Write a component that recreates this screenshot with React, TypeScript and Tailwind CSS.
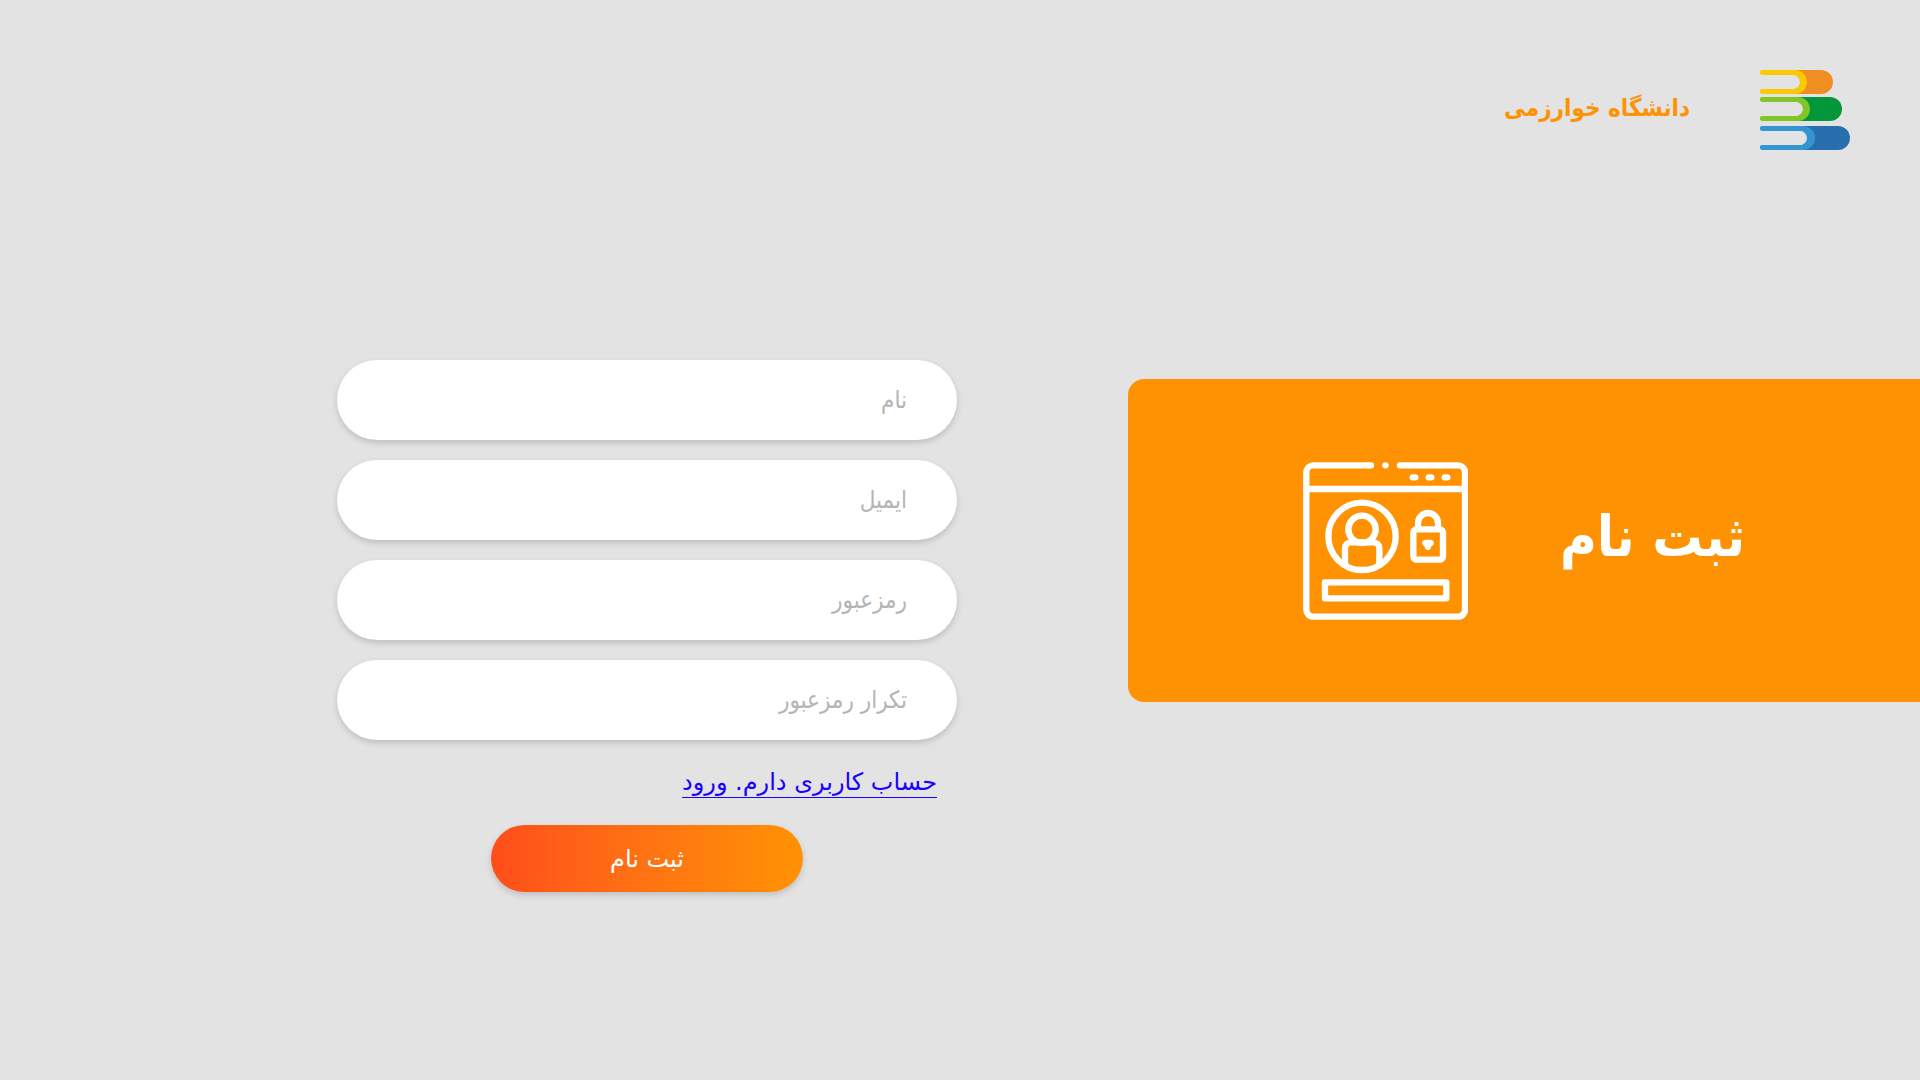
import React from "react";

const fields = [
  { id: "name", label: "نام", type: "text" },
  { id: "email", label: "ایمیل", type: "email" },
  { id: "password", label: "رمزعبور", type: "password" },
  { id: "confirm", label: "تکرار رمزعبور", type: "password" },
];

function Logo() {
  return (
    <svg viewBox="60 60 270 240" className="h-20 w-[90px] shrink-0" aria-hidden="true">
      <path fill="#ef8f23" d="M165 60H243A36 36 0 0 1 243 132H165Z" />
      <path fill="#fbca03" d="M67 60H165A36 36 0 0 1 165 132H67A7.5 7.5 0 0 1 67 117H159A21 21 0 0 0 159 75H67A7.5 7.5 0 0 1 67 60Z" />
      <path fill="#e3e3e3" d="M67 75H159A21 21 0 0 1 159 117H67Z" />
      <path fill="#04973a" d="M174 141H270A36 36 0 0 1 270 213H174Z" />
      <path fill="#82c625" d="M67 141H174A36 36 0 0 1 174 213H67A7.5 7.5 0 0 1 67 198H168A21 21 0 0 0 168 156H67A7.5 7.5 0 0 1 67 141Z" />
      <path fill="#e3e3e3" d="M67 156H168A21 21 0 0 1 168 198H67Z" />
      <path fill="#296fad" d="M189 228H294A36 36 0 0 1 294 300H189Z" />
      <path fill="#3495d3" d="M67 228H189A36 36 0 0 1 189 300H67A7.5 7.5 0 0 1 67 285H180A21 21 0 0 0 180 243H67A7.5 7.5 0 0 1 67 228Z" />
      <path fill="#e3e3e3" d="M67 243H180A21 21 0 0 1 180 285H67Z" />
    </svg>
  );
}

function SignupIcon() {
  return (
    <svg
      viewBox="66 66 495 474"
      className="h-[158px] w-[165px] shrink-0"
      fill="none"
      stroke="#fff"
      strokeWidth="19"
      strokeLinecap="round"
      strokeLinejoin="round"
      aria-hidden="true"
    >
      <path d="M270 76H97A21 21 0 0 0 76 97V508A21 21 0 0 0 97 530H531A21 21 0 0 0 552 508V97A21 21 0 0 0 531 76H357" />
      <path d="M76 147H552" />
      <path d="M313.500 76h.1M395 112h8M443 112h8M491 112h8" />
      <circle cx="243" cy="289" r="101" />
      <circle cx="243" cy="268" r="41" />
      <path d="M192 374V325A18 18 0 0 1 210 307H277A18 18 0 0 1 295 325V374" />
      <rect x="397" y="268" width="89" height="91" rx="10" />
      <path d="M411 264V249A30 30 0 0 1 471 249V264" />
      <path fill="#fff" stroke="none" d="M433 299H449Q459 301 459 310Q458 318 450 320Q449 330 441 330Q433 330 431 320Q424 318 423 310Q423 301 433 299Z" />
      <rect x="132" y="427" width="364" height="48" />
    </svg>
  );
}

export default function App() {
  return (
    <div dir="rtl" lang="fa" className="min-h-screen bg-[#e3e3e3] pb-10 font-['DejaVu_Sans',sans-serif]">
      <header className="flex items-center gap-[70px] px-[70px] pt-[70px]">
        <Logo />
        <p className="pb-1 font-['DejaVu_Sans_Condensed','DejaVu_Sans',sans-serif] text-2xl font-bold text-[#ff9202]">
          دانشگاه خوارزمی
        </p>
      </header>

      <main className="mt-[210px] flex items-start">
        <section className="mt-[19px] flex h-[323px] w-[41.25%] shrink-0 items-center justify-center gap-[92px] rounded-l-2xl bg-[#ff9202]">
          <h1 className="pb-2 font-['DejaVu_Sans_Condensed','DejaVu_Sans',sans-serif] text-[56px] leading-[72px] font-bold text-white">
            ثبت نام
          </h1>
          <SignupIcon />
        </section>

        <form className="ms-[171px] flex w-full max-w-[620px] flex-col gap-5" onSubmit={(e) => e.preventDefault()}>
          {fields.map((field) => (
            <input
              key={field.id}
              id={field.id}
              type={field.type}
              dir="rtl"
              aria-label={field.label}
              placeholder={field.label}
              className="h-20 w-full rounded-full bg-white px-[50px] text-right font-['DejaVu_Sans_Condensed','DejaVu_Sans',sans-serif] text-2xl text-gray-800 shadow-[0_3px_6px_rgba(0,0,0,0.16)] outline-none placeholder:text-[#b4b4b4]"
            />
          ))}
          <a href="#login" className="ms-5 self-start text-2xl leading-[45px] text-[#1a00ff] underline decoration-1 underline-offset-[7px]">
            حساب کاربری دارم. ورود
          </a>
          <button
            type="submit"
            className="h-[67px] w-[312px] self-center rounded-full bg-linear-to-r from-[#ff4d1a] to-[#ff9202] text-2xl text-white shadow-[0_3px_6px_rgba(0,0,0,0.16)]"
          >
            ثبت نام
          </button>
        </form>
      </main>
    </div>
  );
}
